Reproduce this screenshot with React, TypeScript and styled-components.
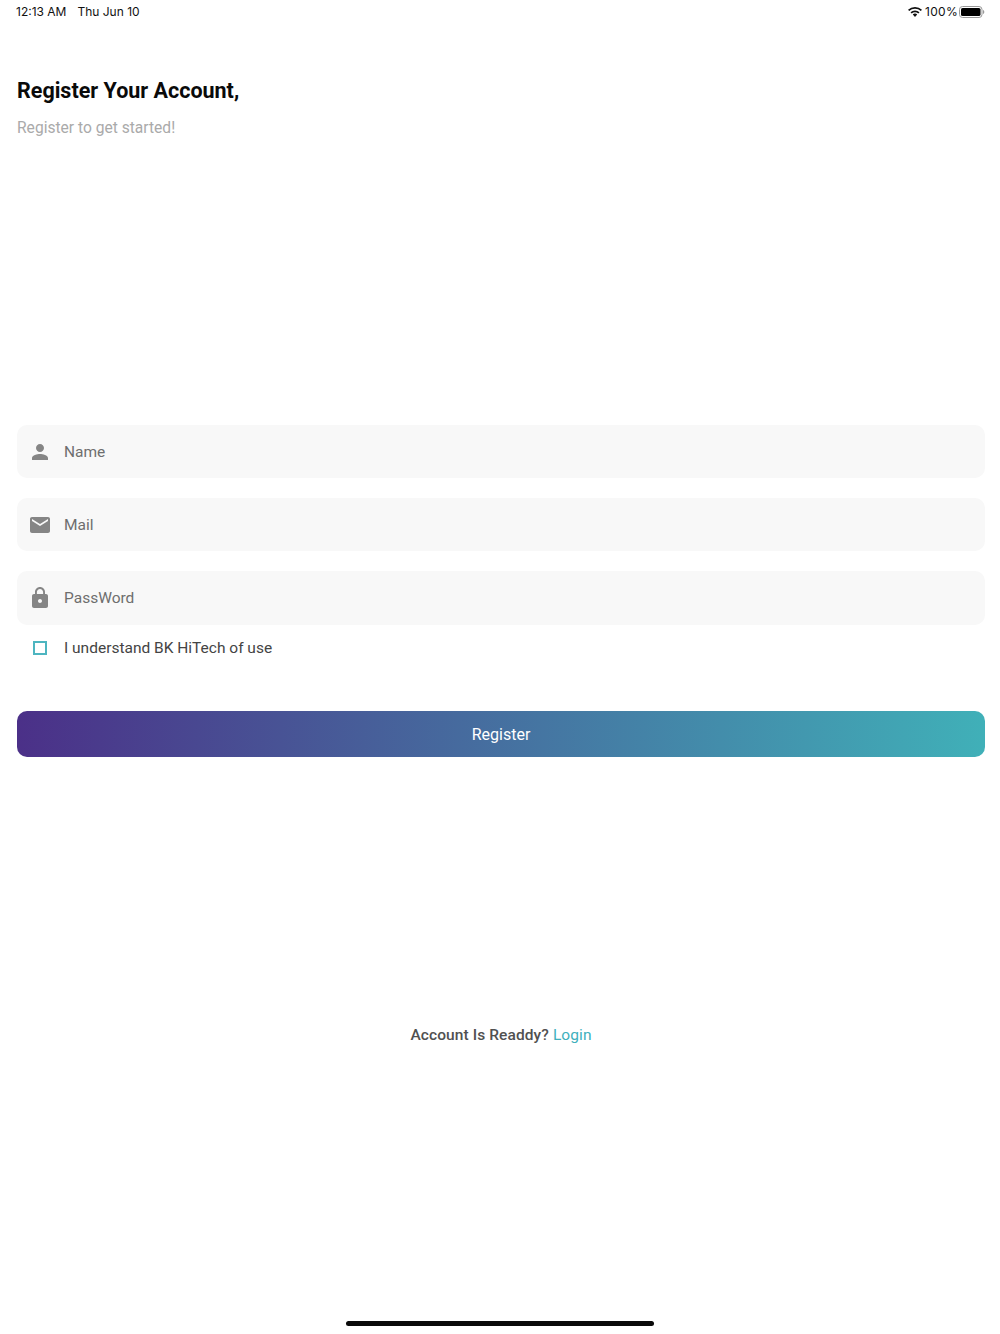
import React from "react";
import styled, { createGlobalStyle } from "styled-components";

const Global = createGlobalStyle`
  html, body { margin: 0; padding: 0; background: #fff; }
  body { font-family: Roboto, "Liberation Sans", sans-serif; }
`;

const Page = styled.div`
  width: 1000px;
  height: 1334px;
  display: flex;
  flex-direction: column;
  overflow: hidden;
  background: #fff;
`;

const StatusBar = styled.div`
  height: 23px;
  padding: 0 15px 0 16px;
  display: flex;
  align-items: center;
  justify-content: space-between;
  font-family: Inter, "Liberation Sans", sans-serif;
  font-size: 12px;
  color: #111;
`;

const StatusGroup = styled.div<{ $gap: number }>`
  display: flex;
  align-items: center;
  gap: ${(p) => p.$gap}px;
`;

const BatteryLevel = styled.span`
  letter-spacing: 0.3px;
  margin-right: -2px;
`;

const Main = styled.div`
  flex: 1;
  padding: 0 15px 0 17px;
  display: flex;
  flex-direction: column;
`;

const Title = styled.h1`
  margin: 54px 0 0;
  font-size: 21.5px;
  line-height: 28px;
  font-weight: 700;
  color: #0a0a0a;
`;

const Subtitle = styled.p`
  margin: 13px 0 0;
  font-size: 15.6px;
  line-height: 20px;
  color: #aaaaaa;
`;

const Form = styled.div`
  margin-top: 287px;
  display: flex;
  flex-direction: column;
  gap: 20px;
`;

const Field = styled.div`
  height: 53.2px;
  border-radius: 10px;
  background: #f8f8f8;
  display: flex;
  align-items: center;
`;

const IconSlot = styled.div`
  width: 46px;
  margin-right: 1px;
  display: flex;
  justify-content: center;
  color: #858585;
`;

const Placeholder = styled.span`
  font-size: 15.5px;
  color: #6e6e6e;
`;

const CheckRow = styled.div`
  height: 24px;
  margin-top: 11px;
  display: flex;
  align-items: center;
`;

const CheckSlot = styled.div`
  width: 46px;
  margin-right: 1px;
  display: flex;
  justify-content: center;
`;

const CheckBox = styled.div`
  width: 14px;
  height: 14px;
  box-sizing: border-box;
  border: 2px solid #4db5c0;
`;

const CheckLabel = styled.span`
  font-size: 15.5px;
  color: #444;
`;

const RegisterButton = styled.button`
  margin-top: 51px;
  height: 46.5px;
  width: 100%;
  border: 0;
  padding: 1px 0 0;
  border-radius: 10px;
  background: linear-gradient(90deg, #4b3088, #40b0b8);
  color: #fff;
  font-family: inherit;
  font-size: 16px;
  font-weight: 400;
`;

const Footer = styled.div`
  margin-top: 268px;
  text-align: center;
  font-size: 15.5px;
  line-height: 20px;
  font-weight: 500;
  letter-spacing: 0.1px;
  color: #505050;
`;

const LoginLink = styled.span`
  font-weight: 400;
  color: #40b0bc;
`;

const HomeBarWrap = styled.div`
  height: 13px;
  display: flex;
  justify-content: center;
  align-items: flex-start;
`;

const HomeBar = styled.div`
  width: 308px;
  height: 5px;
  border-radius: 3px;
  background: #0a0a0a;
`;

const Wifi = () => (
  <svg width="14" height="11" viewBox="0 0 14 11" aria-hidden="true">
    <path d="M7 1a10.3 10.3 0 0 0-7 2.7l1.2 1.3A8.600 8.600 0 0 1 7 2.800 8.600 8.600 0 0 1 12.800 5L14 3.700A10.300 10.300 0 0 0 7 1z" fill="#111" />
    <path d="M7 4.400a6.200 6.200 0 0 0-4.500 1.900l1.200 1.300A4.600 4.600 0 0 1 7 6.200a4.600 4.600 0 0 1 3.300 1.400l1.200-1.300A6.200 6.200 0 0 0 7 4.400z" fill="#111" />
    <path d="M7 7.600a3 3 0 0 0-2.200.9L7 11l2.200-2.500A3 3 0 0 0 7 7.600z" fill="#111" />
  </svg>
);

const Battery = () => (
  <svg width="26" height="12" viewBox="0 0 26 12" aria-hidden="true">
    <rect x="0.5" y="0.5" width="22.5" height="11" rx="3" fill="none" stroke="#999" />
    <rect x="2" y="2" width="19.500" height="8" rx="1.600" fill="#000" />
    <path d="M24 4v4c.8-.3 1.300-1 1.300-2S24.800 4.300 24 4z" fill="#999" />
  </svg>
);

const PersonIcon = () => (
  <svg width="24" height="24" viewBox="0 0 24 24" fill="currentColor" aria-hidden="true">
    <path d="M12 12c2.210 0 4-1.790 4-4s-1.790-4-4-4-4 1.790-4 4 1.790 4 4 4zm0 2c-2.670 0-8 1.340-8 4v2h16v-2c0-2.660-5.330-4-8-4z" />
  </svg>
);

const MailIcon = () => (
  <svg width="20" height="16" viewBox="2 4 20 16" fill="currentColor" aria-hidden="true">
    <path d="M20 4H4c-1.100 0-2 .9-2 2v12c0 1.100.9 2 2 2h16c1.100 0 2-.9 2-2V6c0-1.100-.9-2-2-2zm0 4l-8 5-8-5V6l8 5 8-5v2z" />
  </svg>
);

const LockIcon = () => (
  <svg width="24" height="24" viewBox="0 0 24 24" fill="currentColor" aria-hidden="true">
    <path d="M18 8h-1V6c0-2.760-2.240-5-5-5S7 3.240 7 6v2H6c-1.100 0-2 .9-2 2v10c0 1.100.9 2 2 2h12c1.100 0 2-.9 2-2V10c0-1.100-.9-2-2-2zm-6 9c-1.100 0-2-.9-2-2s.9-2 2-2 2 .9 2 2-.9 2-2 2zm3.100-9H8.900V6c0-1.710 1.390-3.100 3.100-3.100 1.710 0 3.100 1.390 3.100 3.100v2z" />
  </svg>
);

export default function App() {
  return (
    <Page>
      <Global />
      <StatusBar>
        <StatusGroup $gap={11}>
          <span>12:13 AM</span>
          <span>Thu Jun 10</span>
        </StatusGroup>
        <StatusGroup $gap={3}>
          <Wifi />
          <BatteryLevel>100%</BatteryLevel>
          <Battery />
        </StatusGroup>
      </StatusBar>
      <Main>
        <Title>Register Your Account,</Title>
        <Subtitle>Register to get started!</Subtitle>
        <Form>
          <Field>
            <IconSlot><PersonIcon /></IconSlot>
            <Placeholder>Name</Placeholder>
          </Field>
          <Field>
            <IconSlot><MailIcon /></IconSlot>
            <Placeholder>Mail</Placeholder>
          </Field>
          <Field>
            <IconSlot><LockIcon /></IconSlot>
            <Placeholder>PassWord</Placeholder>
          </Field>
        </Form>
        <CheckRow>
          <CheckSlot><CheckBox /></CheckSlot>
          <CheckLabel>I understand BK HiTech of use</CheckLabel>
        </CheckRow>
        <RegisterButton>Register</RegisterButton>
        <Footer>
          Account Is Readdy? <LoginLink>Login</LoginLink>
        </Footer>
      </Main>
      <HomeBarWrap>
        <HomeBar />
      </HomeBarWrap>
    </Page>
  );
}
